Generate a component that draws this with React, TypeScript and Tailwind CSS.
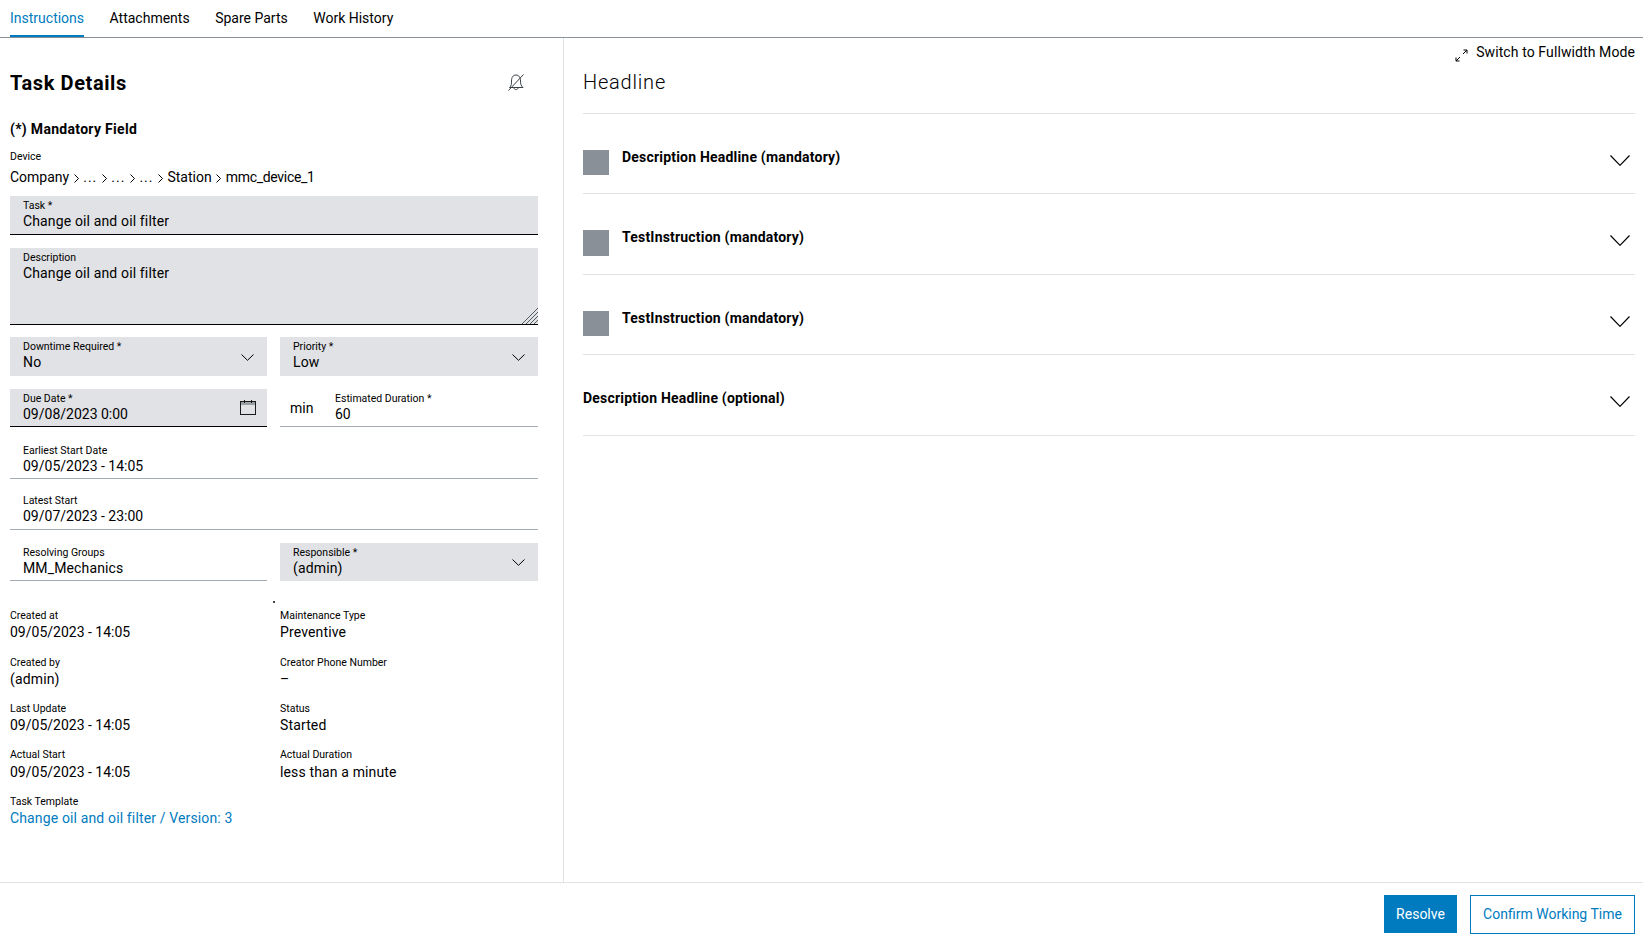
import React from "react";

const Chevron = ({ w = 13, h = 7, className = "", sw = 1 }: { w?: number; h?: number; className?: string; sw?: number }) => (
  <svg width={w} height={h} viewBox={`0 0 ${w} ${h}`} fill="none" stroke="#000" strokeWidth={sw} className={className}>
    <path d={`M0.5 0.5 L${w / 2} ${h - 0.7} L${w - 0.5} 0.5`} />
  </svg>
);

const Crumb = () => (
  <svg width="5" height="9" viewBox="0 0 5 9" fill="none" stroke="#000" strokeWidth="1" className="mt-[7px]">
    <path d="M0.5 0.5 L4.5 4.5 L0.5 8.5" />
  </svg>
);

const valueTrack = (s: string) => (/^\d/.test(s) ? "tracking-normal" : "tracking-[0.14px]");

const Field = ({
  label,
  value,
  variant = "plain",
  icon,
  className = "",
}: {
  label: string;
  value: string;
  variant?: "filled" | "line" | "active" | "plain";
  icon?: React.ReactNode;
  className?: string;
}) => {
  const v =
    variant === "filled"
      ? "bg-[#e0e2e5]"
      : variant === "active"
        ? "bg-[#e0e2e5] border-b border-black"
        : variant === "line"
          ? "border-b border-[#a4abb3]"
          : "";
  return (
    <div className={`flex h-[39px] items-start justify-between pl-[13px] pr-[13px] pt-[3px] ${v} ${className}`}>
      <div className="flex flex-col">
        <span className="text-[10.5px] leading-[14px]">{label}</span>
        <span className={`-mt-[2px] text-[14px] leading-5 ${valueTrack(value)}`}>{value}</span>
      </div>
      {icon}
    </div>
  );
};

const info = [
  ["Created at", "09/05/2023 - 14:05", "Maintenance Type", "Preventive", ""],
  ["Created by", "(admin)", "Creator Phone Number", "–", "mt-px"],
  ["Last Update", "09/05/2023 - 14:05", "Status", "Started", ""],
  ["Actual Start", "09/05/2023 - 14:05", "Actual Duration", "less than a minute", ""],
];

const InfoItem = ({ label, value, link, tall }: { label: string; value: string; link?: boolean; tall?: boolean }) => (
  <div className="flex flex-col">
    <span className="text-[10.5px] leading-[14px]">{label}</span>
    <span className={`text-[14px] leading-5 ${valueTrack(value)} ${tall ? "" : "-mt-px"} ${link ? "text-[#007bc0]" : ""}`}>{value}</span>
  </div>
);

const rows = [
  { title: "Description Headline (mandatory)", square: "h-[25px]", h: "h-[80px]" },
  { title: "TestInstruction (mandatory)", square: "h-[26px]", h: "h-[81px]" },
  { title: "TestInstruction (mandatory)", square: "h-[25px]", h: "h-[80px]" },
  { title: "Description Headline (optional)", square: "", h: "h-[81px]" },
];

export default function App() {
  return (
    <div className="flex h-[940px] w-full flex-col bg-white font-['Roboto',sans-serif] text-[14px] text-black">
      <div className="flex h-[38px] shrink-0 gap-[25.5px] border-b border-[#8a9097] pl-[10px]">
        <div className="h-[37px] border-b-2 border-[#007bc0] pt-[8px] leading-5 text-[#007bc0]">Instructions</div>
        <div className="pt-[8px] leading-5">Attachments</div>
        <div className="pt-[8px] leading-5">Spare Parts</div>
        <div className="pt-[8px] leading-5">Work History</div>
      </div>

      <div className="flex min-h-0 flex-1">
        <div className="w-[564px] shrink-0 border-r border-[#e0e2e5] pl-[10px] pr-[25px]">
          <div className="mt-[31px] flex h-[28px] items-center justify-between pr-[14px]">
            <h1 className="text-[20px] font-bold leading-7 tracking-[0.6px]">Task Details</h1>
            <svg width="16" height="17" viewBox="0 0 16 17" fill="none" stroke="#3a3f44" strokeWidth="1" className="-mt-[2px]">
              <path d="M1.5 13.5 C3.5 12 3.5 9.5 3.5 7 C3.5 3.5 5 1 8 1 C11 1 12.5 3.5 12.5 7 C12.5 9.5 13 12 15 13.5 Z" />
              <path d="M6 14 C6 16 10 16 10 14" />
              <path d="M0.5 16.5 L15.5 0.5" />
            </svg>
          </div>
          <div className="mt-[22px] font-bold leading-5 tracking-[0.3px]">(*) Mandatory Field</div>
          <div className="mt-[11px] text-[10.5px] leading-[14px]">Device</div>
          <div className="mt-[3px] flex gap-[4.5px] leading-5">
            <span>Company</span>
            <Crumb />
            <span className="tracking-[1px]">...</span>
            <Crumb />
            <span className="tracking-[1px]">...</span>
            <Crumb />
            <span className="tracking-[1px]">...</span>
            <Crumb />
            <span>Station</span>
            <Crumb />
            <span className="tracking-[-0.3px]">mmc_device_1</span>
          </div>

          <Field className="mt-[9px]" label="Task *" value="Change oil and oil filter" variant="active" />

          <div className="relative mt-[13px] h-[77px]">
            <span className="absolute left-[13px] top-[3px] text-[10.5px] leading-[14px]">Description</span>
            <textarea
              readOnly
              defaultValue="Change oil and oil filter"
              className="block h-[77px] w-full resize-none border-b border-black bg-[#e0e2e5] pl-[13px] pr-[13px] pt-[15px] text-[14px] leading-5 tracking-[0.14px] outline-none"
            />
            <svg width="16" height="16" viewBox="0 0 16 16" fill="none" stroke="#555a60" strokeWidth="1" className="absolute bottom-[1px] right-0">
              <path d="M0 16 L16 0 M4 16 L16 4 M8 16 L16 8 M12 16 L16 12" />
            </svg>
          </div>

          <div className="mt-[12px] grid grid-cols-[257px_258px] gap-x-[13px]">
            <Field label="Downtime Required *" value="No" variant="filled" icon={<Chevron className="mt-[14px]" />} />
            <Field label="Priority *" value="Low" variant="filled" icon={<Chevron className="mt-[14px]" />} />
          </div>

          <div className="mt-[13px] grid grid-cols-[257px_258px] gap-x-[13px]">
            <Field
              label="Due Date *"
              value="09/08/2023 0:00"
              variant="active"
              className="!h-[38px] !pr-[11px]"
              icon={
                <svg width="16" height="15" viewBox="0 0 16 15" fill="none" stroke="#1a1a1a" strokeWidth="1" className="mt-[8px]">
                  <rect x="0.5" y="1.5" width="15" height="13" />
                  <rect x="1" y="2" width="14" height="3" fill="#9aa0a6" stroke="none" />
                  <path d="M4.5 0 V3 M11.5 0 V3" />
                </svg>
              }
            />
            <div className="flex h-[38px] border-b border-[#a4abb3]">
              <span className="ml-[10px] mt-[9px] w-[45px] leading-5">min</span>
              <div className="flex flex-col pt-[3px]">
                <span className="text-[10.5px] leading-[14px]">Estimated Duration *</span>
                <span className="-mt-[2px] leading-5">60</span>
              </div>
            </div>
          </div>

          <Field className="mt-[14px] !h-[38px]" label="Earliest Start Date" value="09/05/2023 - 14:05" variant="line" />
          <Field className="mt-[12px]" label="Latest Start" value="09/07/2023 - 23:00" variant="line" />

          <div className="mt-[13px] grid grid-cols-[257px_258px] gap-x-[13px]">
            <Field className="!h-[38px]" label="Resolving Groups" value="MM_Mechanics" variant="line" />
            <Field className="!h-[38px]" label="Responsible *" value="(admin)" variant="filled" icon={<Chevron className="mt-[13px]" />} />
          </div>

          <div className="ml-[263px] mt-[20px] h-[2px] w-[2px] bg-[#444]" />

          <div className="mt-[6px] grid grid-cols-[270px_1fr] gap-y-[13px]">
            {info.map(([a, b, c, d, m], i) => (
              <React.Fragment key={i}>
                <div className={m}>
                  <InfoItem label={a} value={b} tall={i === 3} />
                </div>
                <div className={m}>
                  <InfoItem label={c} value={d} tall={i === 3} />
                </div>
              </React.Fragment>
            ))}
            <div className="col-span-2">
              <InfoItem label="Task Template" value="Change oil and oil filter / Version: 3" link />
            </div>
          </div>
        </div>

        <div className="min-w-0 flex-1 pl-[19px] pr-[8px]">
          <div className="mt-[4px] flex items-center justify-end gap-[8px] leading-5 tracking-[0.1px]">
            <svg width="13" height="13" viewBox="0 0 13 13" fill="none" stroke="#000" strokeWidth="1" className="mt-[6px]">
              <path d="M1 12 L5 8 M8 5 L12 1 M8.5 1 H12 V4.5 M1 8.5 V12 H4.5" />
            </svg>
            <span>Switch to Fullwidth Mode</span>
          </div>
          <div className="mt-[6px] border-b border-[#e0e2e5] pb-[17px] text-[20px] font-light leading-7 tracking-[0.8px]">Headline</div>
          {rows.map((r, i) => (
            <div key={i} className={`flex items-start border-b border-[#e0e2e5] pt-[33px] ${r.h}`}>
              {r.square && <div className={`mr-[13px] mt-[3px] w-[26px] bg-[#8a9097] ${r.square}`} />}
              <div className="flex-1 font-bold leading-5 tracking-[0.2px]">{r.title}</div>
              <Chevron w={20} h={11} sw={1.2} className="mr-[5px] mt-[8px]" />
            </div>
          ))}
        </div>
      </div>

      <div className="flex h-[58px] shrink-0 items-start justify-end gap-[13px] border-t border-[#e0e2e5] pr-[8px] pt-[12px]">
        <button className="h-[38px] w-[73px] bg-[#007bc0] text-[14px] text-white">Resolve</button>
        <button className="h-[39px] w-[165px] border border-[#007bc0] text-[14px] text-[#007bc0]">Confirm Working Time</button>
      </div>
    </div>
  );
}
